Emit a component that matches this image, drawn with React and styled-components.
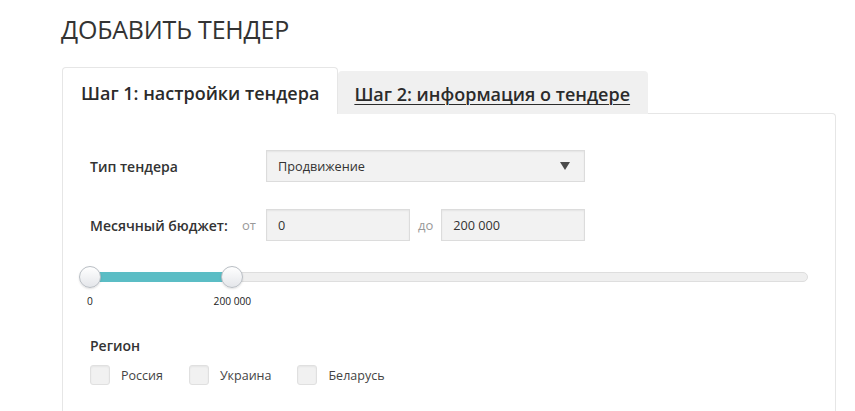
import React from 'react';
import styled, { createGlobalStyle } from 'styled-components';

const GlobalStyle = createGlobalStyle`
    *{
        margin: 0;
        padding: 0;
        box-sizing: border-box;
    }
    body{
        background: #fff;
        font-family: "Open Sans", "Liberation Sans", sans-serif;
        color: #333;
    }
`

const Page = styled.div`
    padding: 14px 0 0 61px;
    width: 836px;
`
const Title = styled.h1`
    font-size: 25px;
    font-weight: 400;
    color: #333;
    line-height: 30px;
    letter-spacing: -0.2px;
`
const Tabs = styled.div`
    display: flex;
    align-items: flex-end;
    margin-top: 23px;
    padding-left: 1px;
    position: relative;
    z-index: 1;
`
const Tab = styled.div`
    height: ${p => p.active ? '47px' : '43px'};
    padding: ${p => p.active ? '11px 18px 0 18px' : '8px 17px 0 15px'};
    background: ${p => p.active ? '#fff' : '#f0f0f0'};
    border: 1px solid ${p => p.active ? '#e6e6e6' : '#f0f0f0'};
    border-bottom: none;
    border-radius: 4px 4px 0 0;
    font-size: 18px;
    font-weight: 600;
    color: #2b2b2b;
    line-height: 28px;
    white-space: nowrap;
    span{
        text-decoration: ${p => p.active ? 'none' : 'underline'};
        text-underline-offset: 3px;
        text-decoration-thickness: 1px;
    }
`
const Panel = styled.div`
    margin-left: 1px;
    margin-top: -1px;
    border: 1px solid #e6e6e6;
    border-bottom: none;
    border-radius: 0 4px 0 0;
    padding: 36px 0 30px 27px;
    height: 300px;
`
const Row = styled.div`
    display: grid;
    grid-template-columns: 176px auto;
    align-items: center;
    margin-bottom: 27px;
`
const Label = styled.div`
    display: flex;
    align-items: center;
    justify-content: space-between;
    padding-right: 10px;
    font-size: 14px;
    font-weight: 600;
    color: #333;
`
const Hint = styled.span`
    font-size: 13px;
    font-weight: 400;
    color: #999;
`
const Field = styled.div`
    display: flex;
    align-items: center;
    justify-content: space-between;
    width: ${p => p.width}px;
    height: 32px;
    padding: 0 14px 0 11px;
    background: #f2f2f2;
    border: 1px solid #dcdcdc;
    box-shadow: inset 0 1px 2px rgba(0,0,0,0.06);
    font-size: 12.7px;
    color: #333;
`
const Arrow = styled.span`
    width: 0;
    height: 0;
    border-left: 5px solid transparent;
    border-right: 5px solid transparent;
    border-top: 8px solid #4a4a4a;
`
const Pair = styled.div`
    display: flex;
    align-items: center;
    gap: 8px;
`
const Slider = styled.div`
    position: relative;
    margin: -4px 0 0 -10px;
    width: 728px;
    height: 48px;
`
const Track = styled.div`
    position: absolute;
    left: 0;
    right: 0;
    top: 8px;
    height: 10px;
    background: #efefef;
    border: 1px solid #dedede;
    border-radius: 5px;
`
const Fill = styled.div`
    position: absolute;
    top: 8px;
    height: 10px;
    background: #5bbdc5;
`
const Handle = styled.div`
    position: absolute;
    top: 2px;
    width: 22px;
    height: 22px;
    margin-left: -11px;
    border-radius: 50%;
    border: 1px solid #b9bec4;
    background: linear-gradient(#ffffff, #e4e6ea);
    box-shadow: 0 1px 2px rgba(0,0,0,0.12);
`
const Tick = styled.div`
    position: absolute;
    top: 30px;
    transform: translateX(-50%);
    font-size: 10.2px;
    color: #222;
    white-space: nowrap;
`
const Region = styled.div`
    margin-top: 24px;
`
const Checks = styled.div`
    display: flex;
    align-items: center;
    gap: 26px;
    margin-top: 10px;
`
const Check = styled.label`
    display: flex;
    align-items: center;
    gap: 11px;
    font-size: 12.5px;
    color: #444;
`
const Box = styled.span`
    width: 20px;
    height: 20px;
    border-radius: 3px;
    background: #f1f1f1;
    border: 1px solid #e0e0e0;
    box-shadow: inset 0 1px 2px rgba(0,0,0,0.05);
`

const fmt = n => String(n).replace(/\B(?=(\d{3})+(?!\d))/g, ' ');

const App = () => {
    const max = 1000000;
    const from = 0;
    const to = 200000;
    const pos = v => 10 + (v / max) * 712;

    return (
        <Page>
            <GlobalStyle />
            <Title>ДОБАВИТЬ ТЕНДЕР</Title>
            <Tabs>
                <Tab active><span>Шаг 1: настройки тендера</span></Tab>
                <Tab><span>Шаг 2: информация о тендере</span></Tab>
            </Tabs>
            <Panel>
                <Row>
                    <Label>Тип тендера</Label>
                    <Field width={319}>Продвижение<Arrow /></Field>
                </Row>
                <Row>
                    <Label>Месячный бюджет:<Hint>от</Hint></Label>
                    <Pair>
                        <Field width={144}>{fmt(from)}</Field>
                        <Hint>до</Hint>
                        <Field width={144}>{fmt(to)}</Field>
                    </Pair>
                </Row>
                <Slider>
                    <Track />
                    <Fill style={{ left: pos(from), width: pos(to) - pos(from) }} />
                    <Handle style={{ left: pos(from) }} />
                    <Handle style={{ left: pos(to) }} />
                    <Tick style={{ left: pos(from) }}>{fmt(from)}</Tick>
                    <Tick style={{ left: pos(to) }}>{fmt(to)}</Tick>
                </Slider>
                <Region>
                    <Label>Регион</Label>
                    <Checks>
                        <Check><Box />Россия</Check>
                        <Check><Box />Украина</Check>
                        <Check><Box />Беларусь</Check>
                    </Checks>
                </Region>
            </Panel>
        </Page>
    )
}

export default App;
